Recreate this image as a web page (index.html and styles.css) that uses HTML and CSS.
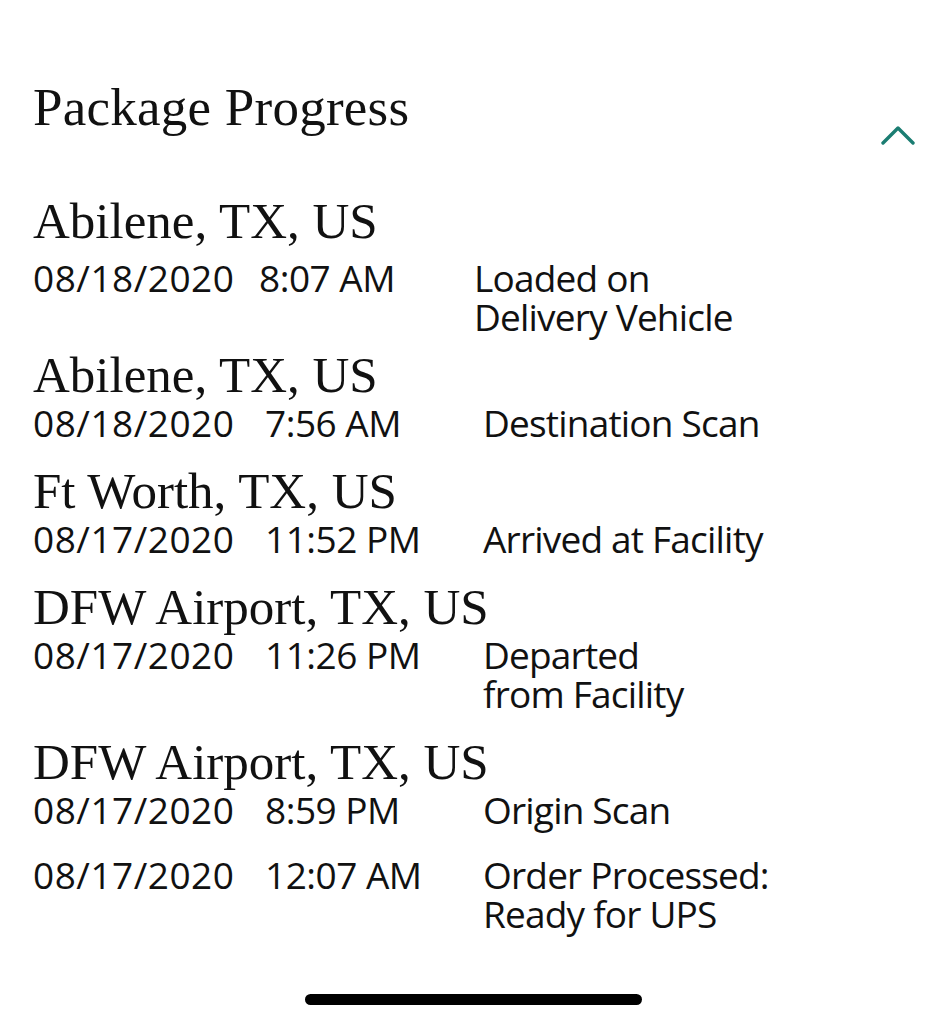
FILE: index.html
```html
<!DOCTYPE html>
<html lang="en">
<head>
<meta charset="utf-8">
<title>Package Progress</title>
<link rel="stylesheet" href="styles.css">
</head>
<body>
<main class="page">
  <header class="header">
    <h1 class="title">Package Progress</h1>
    <svg class="chevron" width="34" height="20" viewBox="0 0 34 20" aria-hidden="true">
      <path d="M2 17 L17 2 L32 17" fill="none" stroke="#1b7d72" stroke-width="3.4" stroke-linecap="round" stroke-linejoin="round"/>
    </svg>
  </header>

  <ol class="events">
    <li class="event event--first">
      <div class="city">Abilene, TX, US</div>
      <div class="detail">
        <span class="date">08/18/2020</span>
        <span class="time">8:07 AM</span>
        <span class="status">Loaded on<br>Delivery Vehicle</span>
      </div>
    </li>
    <li class="event">
      <div class="city">Abilene, TX, US</div>
      <div class="detail">
        <span class="date">08/18/2020</span>
        <span class="time">7:56 AM</span>
        <span class="status">Destination Scan</span>
      </div>
    </li>
    <li class="event">
      <div class="city">Ft Worth, TX, US</div>
      <div class="detail">
        <span class="date">08/17/2020</span>
        <span class="time">11:52 PM</span>
        <span class="status">Arrived at Facility</span>
      </div>
    </li>
    <li class="event">
      <div class="city">DFW Airport, TX, US</div>
      <div class="detail">
        <span class="date">08/17/2020</span>
        <span class="time">11:26 PM</span>
        <span class="status">Departed<br>from Facility</span>
      </div>
    </li>
    <li class="event">
      <div class="city">DFW Airport, TX, US</div>
      <div class="detail">
        <span class="date">08/17/2020</span>
        <span class="time">8:59 PM</span>
        <span class="status">Origin Scan</span>
      </div>
    </li>
    <li class="event event--nocity">
      <div class="detail">
        <span class="date">08/17/2020</span>
        <span class="time">12:07 AM</span>
        <span class="status">Order Processed:<br>Ready for UPS</span>
      </div>
    </li>
  </ol>
</main>
<div class="home-indicator"></div>
</body>
</html>
```

FILE: styles.css
```css
html, body {
  margin: 0;
  padding: 0;
  background: #ffffff;
}

body {
  color: #111111;
  width: 947px;
  height: 1024px;
  overflow: hidden;
}

.page {
  padding: 77px 32px 0 33px;
}

.header {
  display: flex;
  justify-content: space-between;
  align-items: flex-start;
}

.title {
  margin: 0;
  font-family: "Liberation Serif", "Times New Roman", serif;
  font-weight: normal;
  font-size: 53px;
  line-height: 60px;
  letter-spacing: 0.25px;
}

.chevron {
  display: block;
  margin-top: 49px;
}

.events {
  list-style: none;
  margin: 47px 0 0 0;
  padding: 0;
}

.event {
  margin: 0 0 21px 0;
}

.city {
  font-family: "Liberation Serif", "Times New Roman", serif;
  font-size: 51px;
  line-height: 56px;
}

.detail {
  display: grid;
  grid-template-columns: 232px 218px 1fr;
  font-family: "Open Sans", "Noto Sans", sans-serif;
  font-size: 37px;
  line-height: 39px;
}

.date {
  letter-spacing: 0.5px;
}

.time {
  letter-spacing: -0.5px;
}

.status {
  letter-spacing: -0.8px;
}

.event--first {
  margin-bottom: 11px;
}

.event--first .detail {
  padding-top: 9px;
  grid-template-columns: 226px 215px 1fr;
}

.event--nocity {
  margin-top: 26px;
}

.home-indicator {
  position: fixed;
  left: 305px;
  bottom: 19px;
  width: 337px;
  height: 11px;
  border-radius: 6px;
  background: #000000;
}
```
